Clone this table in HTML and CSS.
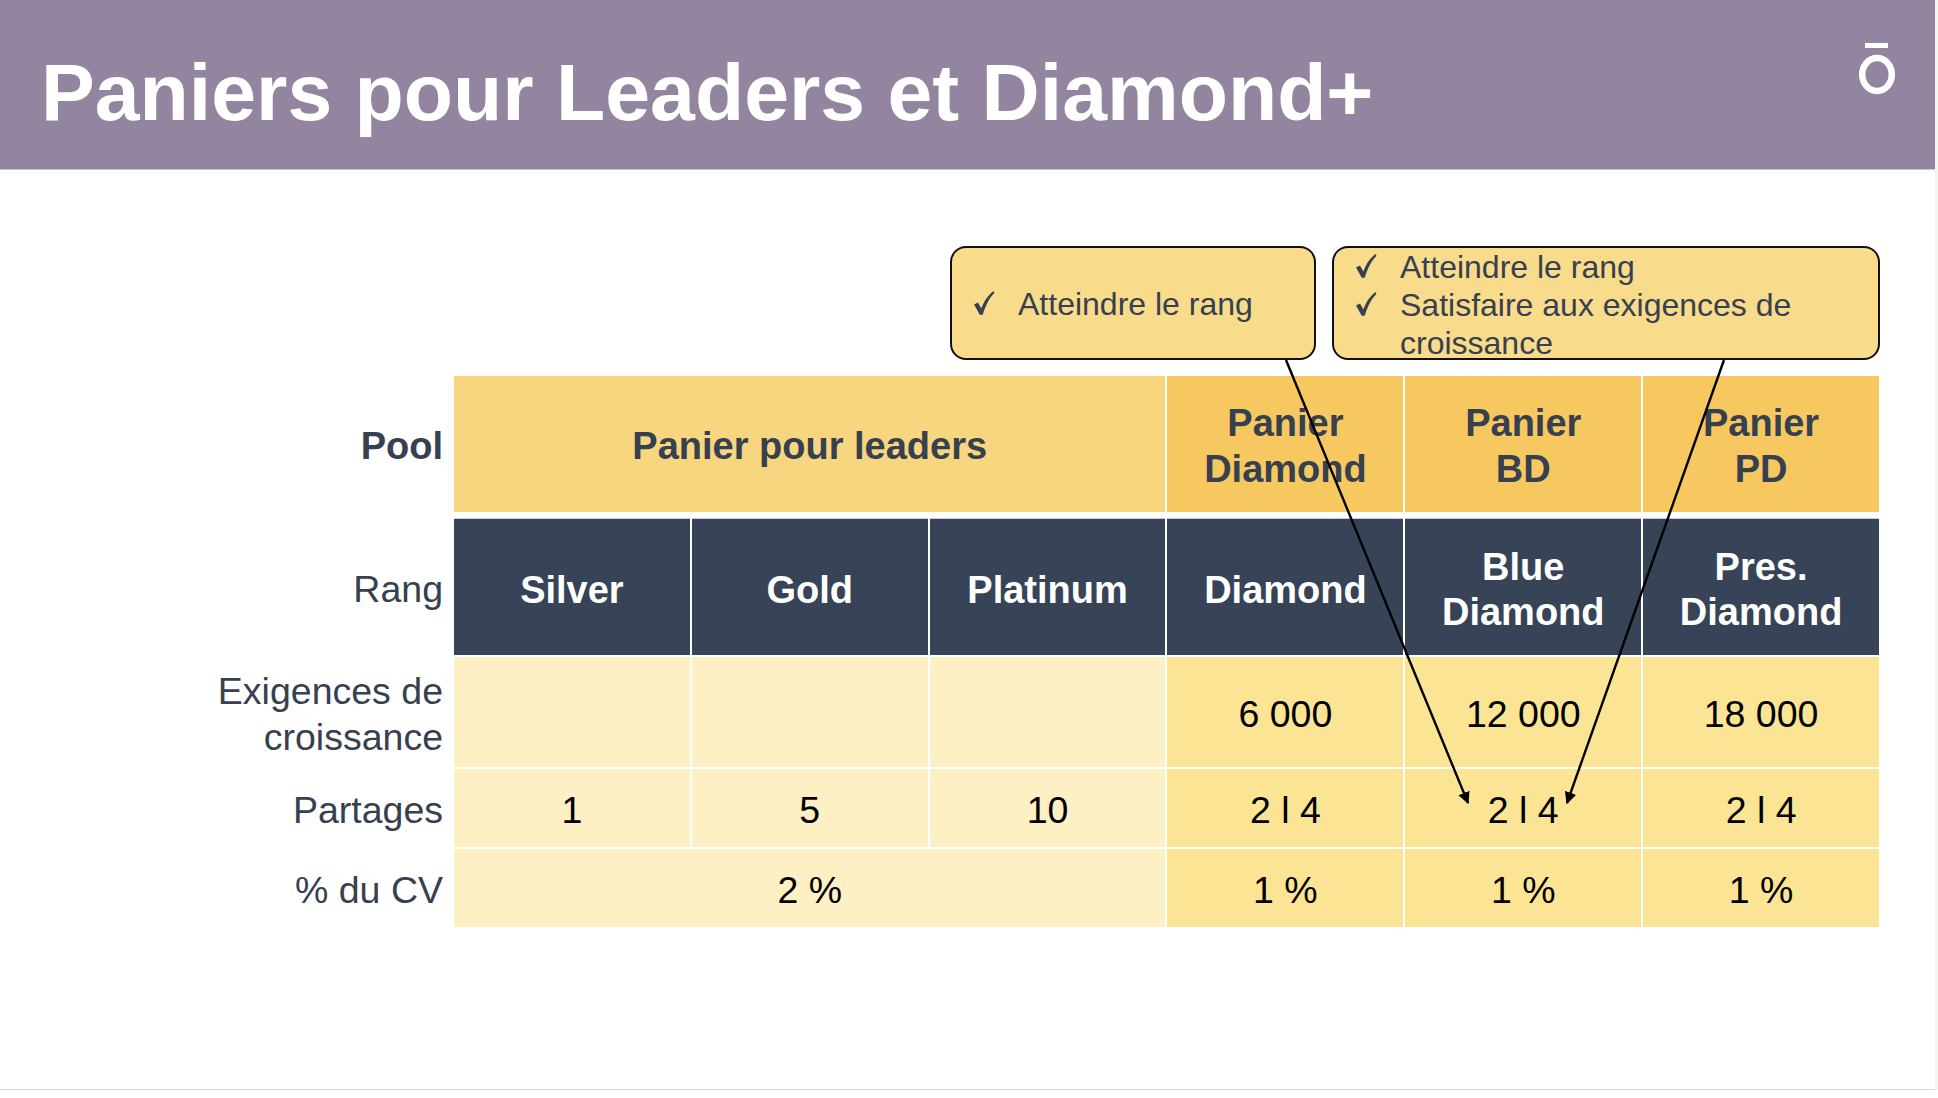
FILE: index.html
```html
<!DOCTYPE html>
<html lang="fr">
<head>
<meta charset="utf-8">
<title>Paniers pour Leaders et Diamond+</title>
<link rel="stylesheet" href="styles.css">
</head>
<body>
<div class="slide">
  <header class="bar">
    <h1 class="title">Paniers pour Leaders et Diamond+</h1>
    <svg class="logo" width="40" height="56" viewBox="0 0 40 56" aria-label="logo">
      <rect x="8" y="2" width="23" height="5" fill="#ffffff"/>
      <ellipse cx="20" cy="33.5" rx="14.8" ry="16.5" fill="none" stroke="#ffffff" stroke-width="6.5"/>
    </svg>
  </header>

  <main class="content">
    <div class="callouts">
      <div class="callout callout-one">
        <div class="item"><span class="check"><svg width="22" height="26" viewBox="0 0 22 26"><path d="M1,14.5 L5,12.5 L8.3,18.5 C11,11.5 14.5,5.5 20.5,1 L21.5,2.8 C16,8.5 12.5,15.5 9.8,24.8 L6.8,24.8 Z" fill="#36404f"/></svg></span><span class="txt">Atteindre le rang</span></div>
      </div>
      <div class="callout callout-two">
        <div class="item"><span class="check"><svg width="22" height="26" viewBox="0 0 22 26"><path d="M1,14.5 L5,12.5 L8.3,18.5 C11,11.5 14.5,5.5 20.5,1 L21.5,2.8 C16,8.5 12.5,15.5 9.8,24.8 L6.8,24.8 Z" fill="#36404f"/></svg></span><span class="txt">Atteindre le rang</span></div>
        <div class="item"><span class="check"><svg width="22" height="26" viewBox="0 0 22 26"><path d="M1,14.5 L5,12.5 L8.3,18.5 C11,11.5 14.5,5.5 20.5,1 L21.5,2.8 C16,8.5 12.5,15.5 9.8,24.8 L6.8,24.8 Z" fill="#36404f"/></svg></span><span class="txt">Satisfaire aux exigences de croissance</span></div>
      </div>
    </div>

    <div class="grid">
      <div class="label bold pool-row">Pool</div>
      <div class="cell pool leaders span3 pool-row">Panier pour leaders</div>
      <div class="cell pool dia pool-row">Panier<br>Diamond</div>
      <div class="cell pool dia pool-row">Panier<br>BD</div>
      <div class="cell pool dia pool-row">Panier<br>PD</div>

      <div class="label">Rang</div>
      <div class="cell rank">Silver</div>
      <div class="cell rank">Gold</div>
      <div class="cell rank">Platinum</div>
      <div class="cell rank">Diamond</div>
      <div class="cell rank">Blue<br>Diamond</div>
      <div class="cell rank">Pres.<br>Diamond</div>

      <div class="label">Exigences de<br>croissance</div>
      <div class="cell num light"></div>
      <div class="cell num light"></div>
      <div class="cell num light"></div>
      <div class="cell num warm">6 000</div>
      <div class="cell num warm">12 000</div>
      <div class="cell num warm">18 000</div>

      <div class="label">Partages</div>
      <div class="cell num light">1</div>
      <div class="cell num light">5</div>
      <div class="cell num light">10</div>
      <div class="cell num warm">2 l 4</div>
      <div class="cell num warm">2 l 4</div>
      <div class="cell num warm">2 l 4</div>

      <div class="label">% du CV</div>
      <div class="cell num light span3">2 %</div>
      <div class="cell num warm">1 %</div>
      <div class="cell num warm">1 %</div>
      <div class="cell num warm">1 %</div>
    </div>
  </main>

  <svg class="arrows" width="1938" height="1098" viewBox="0 0 1938 1098">
    <defs>
      <marker id="ah" viewBox="0 0 10 10" refX="9" refY="5" markerWidth="5" markerHeight="5" orient="auto">
        <path d="M0,0 L10,5 L0,10 z" fill="#000000"/>
      </marker>
    </defs>
    <line x1="1286" y1="360" x2="1468" y2="803" stroke="#000000" stroke-width="2.4" marker-end="url(#ah)"/>
    <line x1="1724" y1="360" x2="1567" y2="803" stroke="#000000" stroke-width="2.4" marker-end="url(#ah)"/>
  </svg>
</div>
</body>
</html>
```

FILE: styles.css
```css
html, body {
  margin: 0;
  padding: 0;
  background: #ffffff;
}

body {
  width: 1938px;
  height: 1098px;
  overflow: hidden;
  font-family: "Liberation Sans", Arial, Helvetica, sans-serif;
}

.slide {
  position: relative;
  width: 1935px;
  height: 1090px;
  box-sizing: border-box;
  border-bottom: 1px solid #d9d5de;
  box-shadow: 3px 0 0 #f6f4ee;
  background: #ffffff;
}

.bar {
  height: 170px;
  background: #93849f;
  display: flex;
  justify-content: space-between;
  align-items: flex-start;
  border-bottom: 1px solid #c9c3d0;
  box-sizing: border-box;
}

.title {
  margin: 0;
  padding: 51px 0 0 41px;
  font-size: 80.6px;
  line-height: 82px;
  font-weight: bold;
  color: #ffffff;
  letter-spacing: 0;
}

.logo {
  display: block;
  margin: 41px 38px 0 0;
}

.content {
  display: flex;
  flex-direction: column;
}

.callouts {
  display: flex;
  gap: 16px;
  padding-left: 950px;
  margin-top: 76px;
}

.callout {
  box-sizing: border-box;
  height: 114px;
  background: #f9dc8b;
  border: 2.5px solid #111111;
  border-radius: 16px;
  padding-left: 21px;
  color: #36404f;
  font-size: 32px;
  line-height: 38px;
  display: flex;
  flex-direction: column;
}

.callout-one {
  width: 366px;
  justify-content: center;
  padding-top: 2px;
}

.callout-two {
  width: 548px;
  justify-content: flex-start;
  padding-top: 0;
  padding-right: 20px;
}

.item {
  display: flex;
}

.check {
  flex: 0 0 45px;
  display: flex;
  align-items: flex-start;
  padding-top: 5px;
}

.check svg {
  display: block;
}

.txt {
  flex: 1;
}

.grid {
  margin-top: 16px;
  width: 1879px;
  display: grid;
  grid-template-columns: 452px repeat(6, 1fr);
  grid-template-rows: 140px 137px 110px 78px 78px;
  column-gap: 2px;
  row-gap: 2px;
}

.pool-row {
  margin-bottom: 4px;
}

.label {
  display: flex;
  align-items: center;
  justify-content: flex-end;
  text-align: right;
  box-sizing: border-box;
  padding: 4px 9px 0 0;
  color: #36404f;
  font-size: 37.5px;
  line-height: 46px;
}

.bold {
  font-weight: bold;
  font-size: 38px;
}

.cell {
  display: flex;
  align-items: center;
  justify-content: center;
  text-align: center;
  box-sizing: border-box;
  padding-top: 4px;
}

.span3 {
  grid-column: span 3;
}

.pool {
  font-weight: bold;
  font-size: 38px;
  line-height: 46px;
  color: #36404f;
}

.leaders {
  background: #f8d680;
}

.dia {
  background: #f6c85f;
}

.rank {
  background: #374357;
  color: #ffffff;
  font-weight: bold;
  font-size: 38px;
  line-height: 45px;
  padding-top: 7px;
  box-shadow: inset 0 1px 0 #c9cbd2;
}

.num {
  font-size: 37.5px;
  line-height: 46px;
  color: #000000;
}

.light {
  background: #fdf0c5;
}

.warm {
  background: #fbe594;
}

.arrows {
  position: absolute;
  left: 0;
  top: 0;
  pointer-events: none;
}
```
